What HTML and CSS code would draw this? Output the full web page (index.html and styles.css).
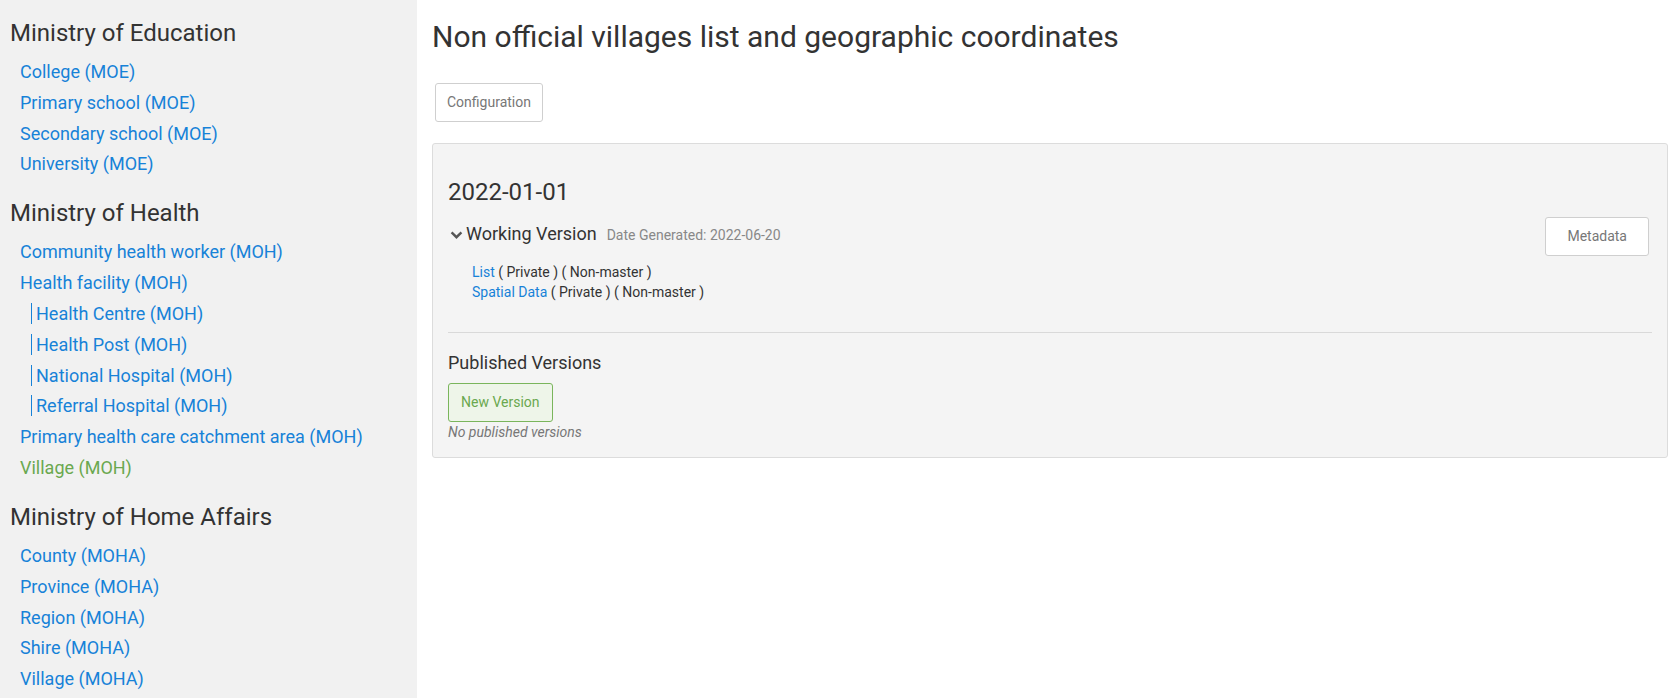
FILE: index.html
```html
<!DOCTYPE html>
<html lang="en">
<head>
<meta charset="utf-8">
<title>Non official villages list and geographic coordinates</title>
<link rel="stylesheet" href="styles.css">
</head>
<body>
<div class="page">
  <nav class="sidebar">
    <section class="group">
      <h3 class="group-title">Ministry of Education</h3>
      <ul class="links">
        <li class="link-item"><a class="link" href="#">College (MOE)</a></li>
        <li class="link-item"><a class="link" href="#">Primary school (MOE)</a></li>
        <li class="link-item"><a class="link" href="#">Secondary school (MOE)</a></li>
        <li class="link-item"><a class="link" href="#">University (MOE)</a></li>
      </ul>
    </section>
    <section class="group">
      <h3 class="group-title">Ministry of Health</h3>
      <ul class="links">
        <li class="link-item"><a class="link" href="#">Community health worker (MOH)</a></li>
        <li class="link-item"><a class="link" href="#">Health facility (MOH)</a></li>
        <li class="link-item nested"><a class="link nest-bar" href="#">Health Centre (MOH)</a></li>
        <li class="link-item nested"><a class="link nest-bar" href="#">Health Post (MOH)</a></li>
        <li class="link-item nested"><a class="link nest-bar" href="#">National Hospital (MOH)</a></li>
        <li class="link-item nested"><a class="link nest-bar" href="#">Referral Hospital (MOH)</a></li>
        <li class="link-item"><a class="link" href="#">Primary health care catchment area (MOH)</a></li>
        <li class="link-item"><a class="link current" href="#">Village (MOH)</a></li>
      </ul>
    </section>
    <section class="group">
      <h3 class="group-title">Ministry of Home Affairs</h3>
      <ul class="links">
        <li class="link-item"><a class="link" href="#">County (MOHA)</a></li>
        <li class="link-item"><a class="link" href="#">Province (MOHA)</a></li>
        <li class="link-item"><a class="link" href="#">Region (MOHA)</a></li>
        <li class="link-item"><a class="link" href="#">Shire (MOHA)</a></li>
        <li class="link-item"><a class="link" href="#">Village (MOHA)</a></li>
      </ul>
    </section>
  </nav>

  <main class="main">
    <h1 class="page-title">Non official villages list and geographic coordinates</h1>
    <div class="toolbar">
      <button class="btn" type="button">Configuration</button>
    </div>

    <div class="panel">
      <h3 class="version-date">2022-01-01</h3>
      <div class="working">
        <div class="working-info">
          <div class="working-head">
            <svg class="chevron" width="13" height="8" viewBox="0 0 13 8" aria-hidden="true"><path d="M1.6 1.4 L6.5 6.2 L11.4 1.4" fill="none" stroke="#555" stroke-width="2.4"/></svg><span class="working-title">Working Version</span><span class="generated">Date Generated: 2022-06-20</span>
          </div>
          <div class="files">
            <div><a class="file-link" href="#">List</a> ( Private ) ( Non-master )</div>
            <div><a class="file-link" href="#">Spatial Data</a> ( Private ) ( Non-master )</div>
          </div>
        </div>
        <button class="btn btn-meta" type="button">Metadata</button>
      </div>
      <hr class="divider">
      <h4 class="published-title">Published Versions</h4>
      <button class="btn btn-new" type="button">New Version</button>
      <div class="empty">No published versions</div>
    </div>
  </main>
</div>
</body>
</html>
```

FILE: styles.css
```css
html, body {
  margin: 0;
  padding: 0;
  background: #fff;
}

body {
  font-family: Roboto, "Liberation Sans", sans-serif;
  color: #333;
}

.page {
  display: flex;
  min-height: 100vh;
}

/* Sidebar */
.sidebar {
  width: 417px;
  flex: none;
  box-sizing: border-box;
  background: #f1f1f1;
  padding-top: 20px;
}

.group + .group {
  margin-top: 20.2px;
}

.group-title {
  margin: 0 0 11px;
  padding-left: 10px;
  font-size: 24px;
  line-height: 26px;
  font-weight: 400;
  color: #333;
}

.links {
  list-style: none;
  margin: 0;
  padding: 0;
}

.link-item {
  padding-left: 20px;
  font-size: 18px;
  line-height: 30.8px;
}

.link-item.nested {
  padding-left: 31px;
}

.link {
  color: #1782d8;
  text-decoration: none;
}

.link.current {
  color: #6aa84f;
}

.nest-bar {
  border-left: 1px solid #1782d8;
  padding-left: 4px;
}

/* Main */
.main {
  flex: 1;
  min-width: 0;
  padding: 20px 4px 0 15px;
}

.page-title {
  margin: 0;
  font-size: 30px;
  line-height: 33px;
  font-weight: 400;
  color: #333;
}

.toolbar {
  margin: 30px 0 0 3px;
}

.btn {
  display: inline-block;
  font-family: Roboto, "Liberation Sans", sans-serif;
  font-size: 14px;
  line-height: 19px;
  padding: 9px 11px;
  border: 1px solid #cfcfcf;
  border-radius: 3px;
  background: #fff;
  color: #777;
  cursor: pointer;
}

.panel {
  margin-top: 21px;
  background: #f4f4f4;
  border: 1px solid #dcdcdc;
  border-radius: 3px;
  padding: 15px;
}

.version-date {
  margin: 20px 0 0;
  font-size: 24px;
  line-height: 26.4px;
  font-weight: 400;
  color: #333;
}

.working {
  display: flex;
  justify-content: space-between;
  align-items: flex-start;
  margin-top: 12px;
}

.working-info {
  padding-top: 6.6px;
}

.working-head {
  font-size: 18px;
  line-height: 19.8px;
  color: #333;
}

.chevron {
  display: inline-block;
  vertical-align: 1px;
  margin: 0 3px 0 2px;
}

.generated {
  margin-left: 10px;
  font-size: 14px;
  color: #888;
}

.files {
  margin-top: 16px;
  padding-left: 24px;
  font-size: 14px;
  line-height: 20px;
  color: #333;
}

.file-link {
  color: #1782d8;
  text-decoration: none;
}

.btn-meta {
  margin-right: 3px;
  padding-left: 21px;
  padding-right: 21px;
}

.divider {
  margin: 30px 0 0;
  border: 0;
  border-top: 1px solid #d9d9d9;
  height: 0;
}

.published-title {
  margin: 20px 0 0;
  font-size: 18px;
  line-height: 19.8px;
  font-weight: 400;
  color: #333;
}

.btn-new {
  margin-top: 10px;
  padding-left: 12px;
  padding-right: 12px;
  border-color: #7ab55c;
  background: #eef5e9;
  color: #6aa84f;
}

.empty {
  font-size: 14px;
  line-height: 20px;
  font-style: italic;
  color: #777;
}
```
